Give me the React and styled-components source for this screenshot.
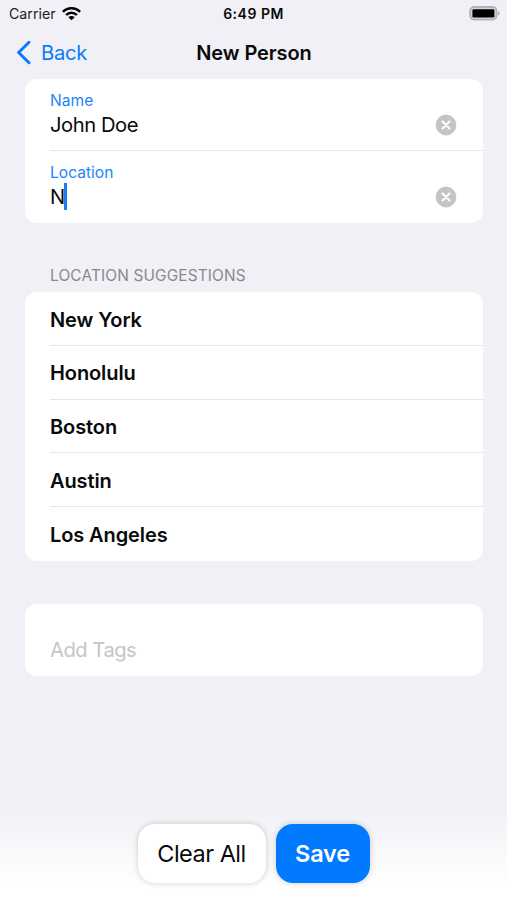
import React from 'react';
import styled, { createGlobalStyle } from 'styled-components';

const suggestions = ['New York', 'Honolulu', 'Boston', 'Austin', 'Los Angeles'];

function WifiIcon() {
    return (
        <svg width="19" height="14" viewBox="0 0 18 14" preserveAspectRatio="none" fill="none" stroke="#000" strokeWidth="2.5">
            <path d="M0.9 4.8C5.4 0.1 12.6 0.1 17.1 4.8" />
            <path d="M3.9 8C6.8 5 11.2 5 14.1 8" />
            <path d="M9 13.2L6 10.2C7.7 8.7 10.3 8.7 12 10.2Z" fill="#000" stroke="none" />
        </svg>
    );
}

function BatteryIcon() {
    return (
        <svg width="32" height="15" viewBox="0 0 32 15">
            <rect x="1.2" y="1" width="26.4" height="12.6" rx="4" fill="#d9d9dc" stroke="#b2b2b5" strokeWidth="1.8" />
            <rect x="3.4" y="3.2" width="22" height="8.4" rx="1.4" fill="#000" />
            <path d="M29 5.2C31.3 6 31.3 8.6 29 9.4Z" fill="#b2b2b5" />
        </svg>
    );
}

function ClearIcon() {
    return (
        <svg width="22" height="22" viewBox="0 0 22 22">
            <circle cx="11" cy="11" r="10.4" fill="#c4c4c5" />
            <path d="M7.5 7.5L14.5 14.5M14.5 7.5L7.5 14.5" stroke="#fff" strokeWidth="2" strokeLinecap="round" />
        </svg>
    );
}

function Field({ label, value, focused }) {
    return (
        <FieldRow>
            <div>
                <FieldLabel>{label}</FieldLabel>
                <FieldValue>
                    {value}
                    {focused && <Caret />}
                </FieldValue>
            </div>
            <ClearButton aria-label={`Clear ${label}`}>
                <ClearIcon />
            </ClearButton>
        </FieldRow>
    );
}

function App() {
    return (
        <>
            <GlobalStyle />
            <Screen>
                <StatusBar>
                    <Carrier>
                        Carrier
                        <WifiIcon />
                    </Carrier>
                    <Clock>6:49 PM</Clock>
                    <Battery>
                        <BatteryIcon />
                    </Battery>
                </StatusBar>
                <NavBar>
                    <BackButton>
                        <svg width="15" height="25" viewBox="0 0 15 25" fill="none">
                            <path d="M13 2.3L2.6 12.5L13 22.7" stroke="#087dfb" strokeWidth="3" strokeLinecap="round" strokeLinejoin="round" />
                        </svg>
                        <span>Back</span>
                    </BackButton>
                    <NavTitle>New Person</NavTitle>
                </NavBar>
                <Card>
                    <Field label="Name" value="John Doe" />
                    <Field label="Location" value="N" focused />
                </Card>
                <SectionTitle>LOCATION SUGGESTIONS</SectionTitle>
                <Card>
                    {suggestions.map(name => (
                        <Suggestion key={name}>{name}</Suggestion>
                    ))}
                </Card>
                <TagsCard>
                    <Placeholder>Add Tags</Placeholder>
                </TagsCard>
                <Footer>
                    <Button $width="128px">Clear All</Button>
                    <Button $width="94px" $primary>Save</Button>
                </Footer>
            </Screen>
        </>
    );
}

export default App;

const GlobalStyle = createGlobalStyle`
    * {
        box-sizing: border-box;
    }

    body {
        margin: 0;
        background: #f1f0f6;
    }
`;

const Screen = styled.div`
    width: 507px;
    height: 900px;
    display: flex;
    flex-direction: column;
    overflow: hidden;
    background: #f1f0f6;
    color: #0a0a0a;
    font-family: Inter, "Liberation Sans", sans-serif;

    svg {
        display: block;
        flex-shrink: 0;
    }

    button {
        font-family: inherit;
        border: none;
        padding: 0;
        background: none;
    }
`;

const StatusBar = styled.div`
    height: 27px;
    display: grid;
    grid-template-columns: 1fr auto 1fr;
    align-items: center;
    padding: 0 6px 0 9px;
`;

const Carrier = styled.div`
    display: flex;
    align-items: center;
    gap: 6px;
    font-size: 14.2px;
    color: #1c1c1e;
`;

const Clock = styled.div`
    margin-right: 3px;
    font-size: 14px;
    font-weight: 600;
    letter-spacing: 0.5px;
`;

const Battery = styled.div`
    justify-self: end;
`;

const NavBar = styled.div`
    height: 52px;
    display: grid;
    grid-template-columns: 1fr auto 1fr;
    align-items: center;
    padding: 0 15px 2px 16px;
`;

const BackButton = styled.button`
    display: flex;
    align-items: center;
    gap: 10px;
    font-size: 20.2px;
    letter-spacing: -0.3px;
    color: #087dfb;
`;

const NavTitle = styled.div`
    padding-top: 2px;
    font-size: 20px;
    font-weight: 600;
    letter-spacing: -0.1px;
`;

const Card = styled.div`
    margin: 0 24px 0 25px;
    border-radius: 12px;
    background: #fff;
`;

const FieldRow = styled.div`
    height: 72px;
    margin-left: 25px;
    padding: 12px 26px 0 0;
    display: flex;
    justify-content: space-between;

    &:not(:last-child) {
        border-bottom: 1px solid #e6e6e8;
    }
`;

const FieldLabel = styled.div`
    font-size: 15.6px;
    line-height: 20px;
    color: #1b86fa;
`;

const FieldValue = styled.div`
    display: flex;
    align-items: center;
    height: 27px;
    font-size: 20.2px;
    line-height: 25px;
    letter-spacing: -0.45px;
`;

const Caret = styled.span`
    width: 3px;
    height: 27px;
    margin-left: -1px;
    background: #1c7af0;
`;

const ClearButton = styled.button`
    height: 22px;
    margin-top: 22.6px;
`;

const SectionTitle = styled.div`
    height: 69px;
    padding: 43px 0 0 50px;
    font-size: 15.4px;
    line-height: 20px;
    letter-spacing: 0.15px;
    color: #89898e;
`;

const Suggestion = styled.div`
    height: 53.8px;
    margin-left: 25px;
    padding-top: 1px;
    display: flex;
    align-items: center;
    font-size: 20px;
    font-weight: 600;
    letter-spacing: -0.1px;

    &:not(:last-child) {
        padding-top: 2.6px;
        border-bottom: 1px solid #e6e6e8;
    }
`;

const TagsCard = styled(Card)`
    height: 72px;
    margin-top: 43px;
    padding: 34px 25px 0;
`;

const Placeholder = styled.div`
    font-size: 20.2px;
    line-height: 24px;
    letter-spacing: -0.5px;
    color: #c5c5c7;
`;

const Footer = styled.div`
    height: 94px;
    margin-top: auto;
    padding-top: 18px;
    display: flex;
    justify-content: center;
    gap: 10px;
    background: linear-gradient(#f1f0f6, #fff 85%);
`;

const Button = styled.button`
    width: ${props => props.$width};
    height: 59px;

    && {
        border-radius: 17px;
        background: ${props => (props.$primary ? '#027aff' : '#fff')};
        color: ${props => (props.$primary ? '#fff' : '#0a0a0a')};
        font-size: 23.5px;
        font-weight: ${props => (props.$primary ? 600 : 400)};
        letter-spacing: ${props => (props.$primary ? '-0.2px' : '-0.5px')};
        box-shadow: 0 0 6px rgba(0, 0, 0, 0.2);
    }
`;
